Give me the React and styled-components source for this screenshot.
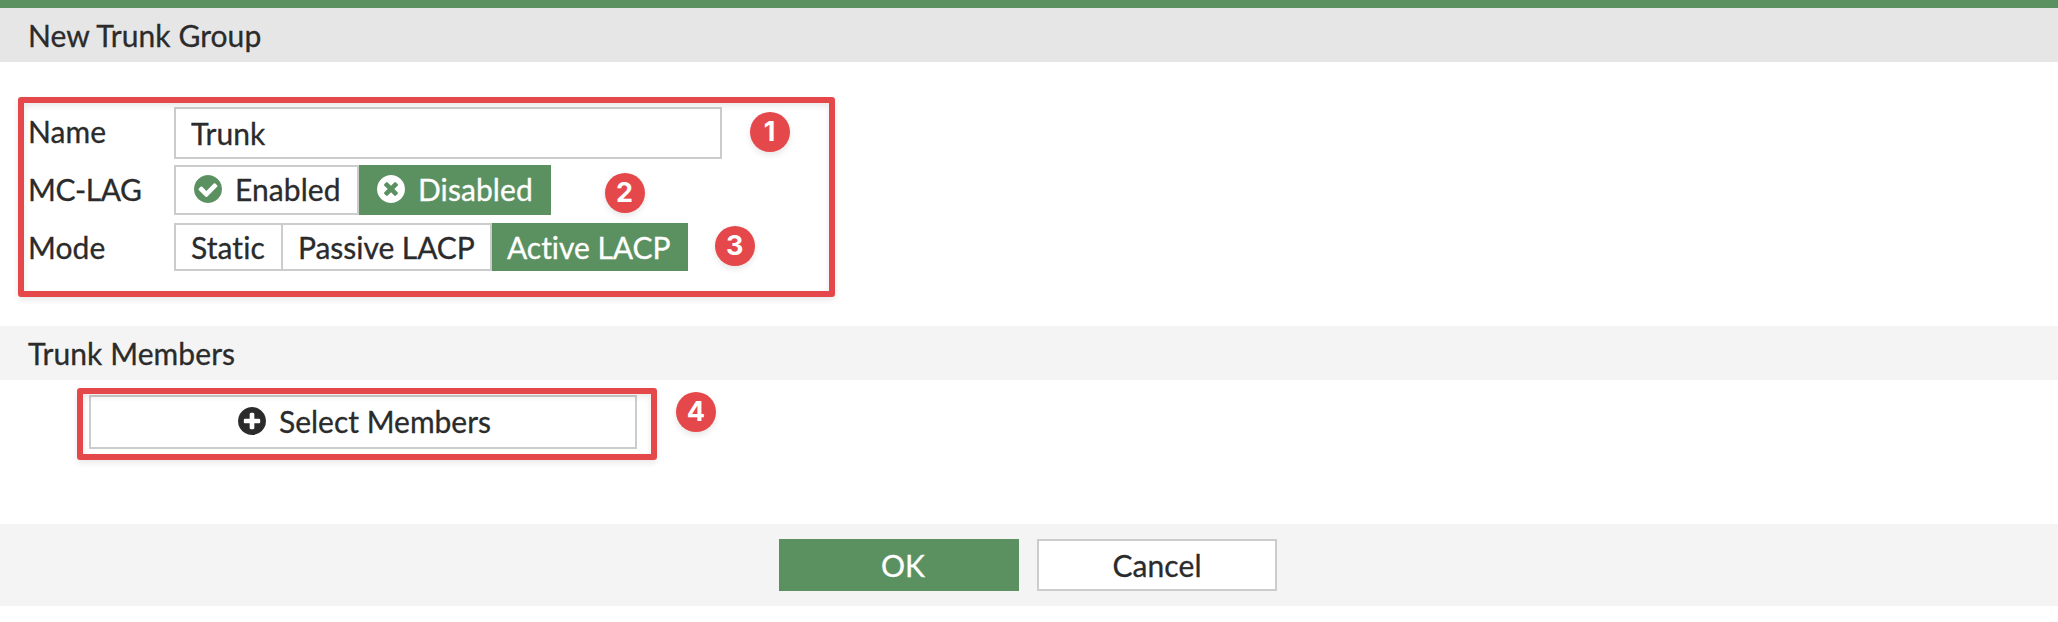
import React from "react";
import styled, { createGlobalStyle, css } from "styled-components";

const GREEN = "#5b9160";
const INK = "#2b2b2b";
const LINE = "#cccccc";
const RED = "#e5484a";

const GlobalStyle = createGlobalStyle`
  *, *::before, *::after { box-sizing: border-box; }
  body { margin: 0; background: #fff; overflow: hidden; }
`;

const Page = styled.main`
  position: relative;
  display: flex;
  flex-direction: column;
  height: 622px;
  border-top: 8px solid ${GREEN};
  color: ${INK};
  font: 30px/36px Lato, "Liberation Sans", sans-serif;
  font-variant-ligatures: none;
  letter-spacing: 0.08px;
  -webkit-text-stroke: 0.3px currentColor;
  white-space: nowrap;
`;

const Heading = styled.h1`
  display: flex;
  align-items: center;
  flex: none;
  height: 54px;
  margin: 0;
  padding: 0 28px;
  font: inherit;
  font-variant-ligatures: none;
  background: ${(p) => (p.$main ? "#e6e6e6" : "#f4f4f4")};
`;

const Form = styled.section`
  display: flex;
  flex-direction: column;
  flex: none;
  height: 264px;
  padding: 45px 28px 0;
`;

const Row = styled.div`
  display: flex;
  align-items: flex-start;
  height: 58px;
`;

const Label = styled.label`
  width: 146px;
  padding-top: 6px;
  letter-spacing: ${(p) => (p.$tight ? "-0.45px" : "inherit")};
`;

const NameInput = styled.input`
  width: 548px;
  height: 52px;
  padding: 0 15px;
  border: 2px solid ${LINE};
  border-radius: 0;
  outline: none;
  color: inherit;
  background: #fff;
  font: inherit;
  letter-spacing: inherit;
`;

const Segments = styled.div`
  display: flex;
  height: ${(p) => p.$height}px;
`;

const buttonBase = css`
  display: flex;
  align-items: center;
  margin: 0;
  border: 2px solid ${LINE};
  border-radius: 0;
  color: ${INK};
  background: #fff;
  font: inherit;
  font-variant-ligatures: none;
  letter-spacing: inherit;
  white-space: nowrap;

  ${(p) =>
    p.$active &&
    css`
      border-color: ${GREEN};
      background: ${GREEN};
      color: #fff;
    `}
`;

const Segment = styled.button`
  ${buttonBase}
  gap: 13px;
  width: ${(p) => p.$width}px;
  padding: 0 0 ${(p) => p.$lift || 0}px ${(p) => p.$inset}px;
  letter-spacing: ${(p) => (p.$tight ? "-0.05px" : "inherit")};

  & + & { border-left: 0; }
`;

const Members = styled.section`
  flex: none;
  height: 144px;
  padding: 15px 0 0 89px;
`;

const SelectButton = styled.button`
  ${buttonBase}
  justify-content: center;
  gap: 13px;
  width: 548px;
  height: 54px;
  padding: 0 0 2px 3px;
  letter-spacing: 0;
`;

const Footer = styled.footer`
  display: flex;
  justify-content: center;
  align-items: center;
  gap: 18px;
  flex: none;
  height: 82px;
  padding-right: 2px;
  background: #f4f4f4;
`;

const ActionButton = styled.button`
  ${buttonBase}
  justify-content: center;
  width: 240px;
  height: 52px;
  padding: 0 0 0 ${(p) => (p.$active ? 8 : 0)}px;
`;

const Icon = styled.svg`
  flex: none;
  width: 28px;
  height: 28px;
  fill: ${(p) => p.$color || "currentColor"};
`;

const Highlight = styled.div`
  position: absolute;
  left: ${(p) => p.$x}px;
  top: ${(p) => p.$y - 8}px;
  width: ${(p) => p.$w}px;
  height: ${(p) => p.$h}px;
  border: 6px solid ${RED};
  border-radius: 3px;
  box-shadow: 0 3px 6px rgba(0, 0, 0, 0.09), inset 0 3px 6px rgba(0, 0, 0, 0.09);
  pointer-events: none;
`;

const Badge = styled.span`
  position: absolute;
  left: ${(p) => p.$x - 20}px;
  top: ${(p) => p.$y - 28}px;
  display: flex;
  align-items: center;
  justify-content: center;
  width: 40px;
  height: 40px;
  padding-bottom: 1px;
  border-radius: 50%;
  background: ${RED};
  color: #fff;
  font: 700 27px/38px Inter, sans-serif;
  letter-spacing: 0;
  -webkit-text-stroke: 0;
  box-shadow: 0 3px 6px rgba(0, 0, 0, 0.1);
`;

const DISC =
  "q0 209-103 385.5t-279.5 279.5-385.5 103-385.5-103-279.5-279.5-103-385.5 103-385.5 279.5-279.5 385.5-103 385.5 103 279.5 279.5 103 385.5z";

const MARKS = {
  check:
    "M1412 734q0-28-18-46l-91-90q-19-19-45-19t-45 19l-408 407-226-226q-19-19-45-19t-45 19l-91 90q-18 18-18 46 0 27 18 45l362 362q19 19 45 19 27 0 46-19l543-543q18-18 18-45zm252 162",
  times:
    "M1277 1122q0-26-19-45l-181-181 181-181q19-19 19-45 0-27-19-46l-90-90q-19-19-46-19-26 0-45 19l-181 181-181-181q-19-19-45-19-27 0-46 19l-90 90q-19 19-19 46 0 26 19 45l181 181-181 181q-19 19-19 45 0 27 19 46l90 90q19 19 46 19 26 0 45-19l181-181 181 181q19 19 45 19 27 0 46-19l90-90q19-19 19-46zm387-226",
  plus:
    "M1344 960v-128q0-26-19-45t-45-19h-256v-256q0-26-19-45t-45-19h-128q-26 0-45 19t-19 45v256h-256q-26 0-45 19t-19 45v128q0 26 19 45t45 19h256v256q0 26 19 45t45 19h128q26 0 45-19t19-45v-256h256q26 0 45-19t19-45zm320-64",
};

function CircleIcon({ mark, color }) {
  return (
    <Icon viewBox="128 128 1536 1536" $color={color} aria-hidden="true">
      <path d={MARKS[mark] + DISC} />
    </Icon>
  );
}

export default function App() {
  return (
    <>
      <GlobalStyle />
      <Page>
        <Heading $main>New Trunk Group</Heading>
        <Form>
          <Row>
            <Label htmlFor="name">Name</Label>
            <NameInput id="name" defaultValue="Trunk" />
          </Row>
          <Row>
            <Label as="span" $tight>MC-LAG</Label>
            <Segments $height={50}>
              <Segment $width={185} $inset={18} $lift={2}>
                <CircleIcon mark="check" color={GREEN} />
                Enabled
              </Segment>
              <Segment $width={192} $inset={18} $lift={2} $active>
                <CircleIcon mark="times" />
                Disabled
              </Segment>
            </Segments>
          </Row>
          <Row>
            <Label as="span">Mode</Label>
            <Segments $height={48}>
              <Segment $width={109} $inset={15}>Static</Segment>
              <Segment $width={209} $inset={15} $tight>Passive LACP</Segment>
              <Segment $width={196} $inset={15} $tight $active>Active LACP</Segment>
            </Segments>
          </Row>
        </Form>
        <Heading as="h2">Trunk Members</Heading>
        <Members>
          <SelectButton>
            <CircleIcon mark="plus" />
            Select Members
          </SelectButton>
        </Members>
        <Footer>
          <ActionButton $active>OK</ActionButton>
          <ActionButton>Cancel</ActionButton>
        </Footer>

        <Highlight $x={18} $y={97} $w={817} $h={200} />
        <Highlight $x={77} $y={388} $w={580} $h={72} />
        <Badge $x={769.7} $y={132}>1</Badge>
        <Badge $x={624.5} $y={193}>2</Badge>
        <Badge $x={734.7} $y={246}>3</Badge>
        <Badge $x={696} $y={412.3}>4</Badge>
      </Page>
    </>
  );
}
